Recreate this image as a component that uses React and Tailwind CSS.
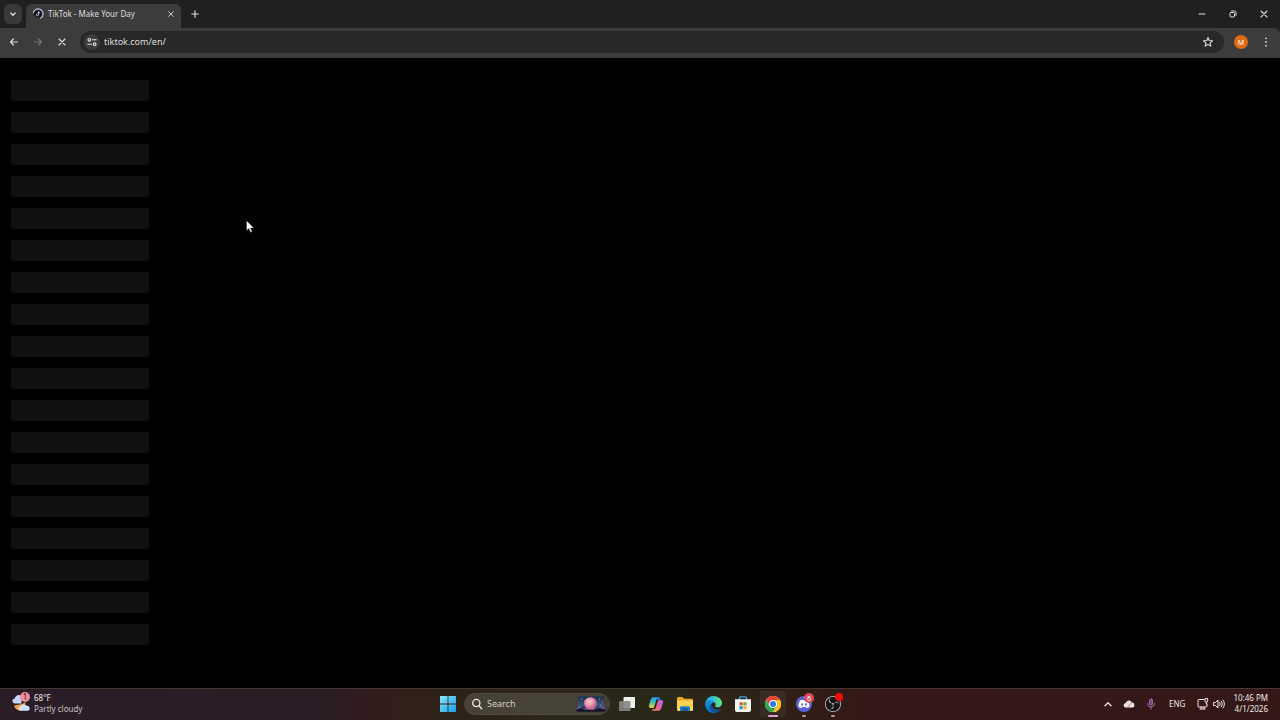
import { FaDiscord } from "react-icons/fa";
import { SiObsstudio } from "react-icons/si";

const stroke = { fill: "none", stroke: "currentColor", strokeLinecap: "round", strokeLinejoin: "round" };

function ChevronIcon({ up = false }) {
  return (
    <svg viewBox="0 0 10 10" className="size-2.5" {...stroke} strokeWidth="1.3">
      <path d={up ? "M2 6.7 5 3.7l3 3" : "M2.8 4 5 6.2 7.2 4"} />
    </svg>
  );
}

function CloseIcon({ className }) {
  return (
    <svg viewBox="0 0 10 10" className={className} {...stroke} strokeWidth="1.1">
      <path d="m2 2 6 6M8 2 2 8" />
    </svg>
  );
}

function ArrowIcon({ forward = false }) {
  return (
    <svg viewBox="0 0 12 12" className="size-3" {...stroke} strokeWidth="1.1">
      <path d={forward ? "M2.500 6h7M6.500 3l3 3-3 3" : "M9.500 6h-7M5.500 3l-3 3 3 3"} />
    </svg>
  );
}

function LoadingFavicon() {
  return (
    <svg viewBox="0 0 12 12" className="size-3">
      <circle cx="6" cy="6" r="3.800" fill="#101114" />
      <path d="M1.300 4.500A5 5 0 1 1 8.500 10.300" fill="none" stroke="#a9bce8" strokeWidth="1.200" strokeLinecap="round" />
      <path d="M6.600 3.600v3.200a1.100 1.100 0 1 1-1.100-1.100M6.600 3.600c.1.8.7 1.300 1.500 1.300" fill="none" stroke="#c9d4e8" strokeWidth=".9" />
    </svg>
  );
}

function TuneIcon() {
  return (
    <svg viewBox="0 0 12 12" className="size-3" {...stroke} strokeWidth="1.100">
      <circle cx="3.300" cy="3.800" r="1.300" />
      <path d="M6.300 3.800h4M1.700 8.200h4" />
      <circle cx="8.700" cy="8.200" r="1.300" />
    </svg>
  );
}

function StarIcon() {
  return (
    <svg viewBox="0 0 12 12" className="size-3" {...stroke} strokeWidth="1.100">
      <path d="m6 1.500 1.300 3 3.200.3-2.400 2.100.7 3.200L6 8.400l-2.800 1.700.7-3.200-2.400-2.100 3.200-.3z" />
    </svg>
  );
}

function WeatherIcon() {
  return (
    <svg viewBox="0 0 20 20" className="size-5">
      <path d="M2 12.500a7 7 0 0 0 5 5l3 .2L14 9l-4 2z" fill="#f2a33d" />
      <path d="M3 10.500a2.500 2.500 0 0 1-.2-5A3.800 3.800 0 0 1 9.500 3.500v7z" fill="#c3d5f5" />
      <path d="M8.500 17.800a2.100 2.100 0 0 1 .2-4.200 3.300 3.300 0 0 1 6-.8 2.500 2.500 0 0 1 .8 5z" fill="#cfe0fb" />
    </svg>
  );
}

function WindowsIcon() {
  return (
    <svg viewBox="0 0 16 16" className="size-4">
      <defs>
        <linearGradient id="win" x1="0" y1="0" x2="1" y2="1">
          <stop stopColor="#8be5fb" />
          <stop offset="1" stopColor="#159be8" />
        </linearGradient>
      </defs>
      <path d="M0 0h7.600v7.600H0zM8.400 0H16v7.600H8.400zM0 8.400h7.600V16H0zM8.400 8.400H16V16H8.400z" fill="url(#win)" />
    </svg>
  );
}

function SearchIcon() {
  return (
    <svg viewBox="0 0 12 12" className="size-3" {...stroke} strokeWidth="1.300">
      <circle cx="5.300" cy="5" r="3.600" />
      <path d="m8 7.700 2.700 3" />
    </svg>
  );
}

function SpaceArt() {
  return (
    <svg viewBox="0 0 32 16" className="h-4 w-8">
      <defs>
        <linearGradient id="sky" x1="0" y1="0" x2="0" y2="1">
          <stop stopColor="#17304f" />
          <stop offset=".55" stopColor="#35577f" />
          <stop offset="1" stopColor="#15172b" />
        </linearGradient>
        <radialGradient id="planet" cx=".4" cy=".35">
          <stop stopColor="#ffc0c8" />
          <stop offset=".7" stopColor="#e990a6" />
          <stop offset="1" stopColor="#c96b91" />
        </radialGradient>
      </defs>
      <path d="M3 .5h26l-1 5 3.500 8Q31 15 29 15.500H3Q1 15 .5 13.500L4 6z" fill="url(#sky)" />
      <path d="m1 13 4-4 3 4 4-1 8 1 4-2 3-2 4 4-2 2H3z" fill="#5e5580" />
      <path d="m1 14 5-2 4 2 5-1 4 1 5-2 7 2-2 1.500H3z" fill="#131329" />
      <circle cx="15.500" cy="7.500" r="6.300" fill="url(#planet)" />
      <path d="M12 5.500q3 1 5-1" stroke="#ffdadd" strokeWidth=".8" fill="none" />
      <path d="M6 3h1M9 5h1M24 3h1M27 6h1M25 9h1" stroke="#e2799f" />
    </svg>
  );
}

function TaskViewIcon() {
  return (
    <svg viewBox="0 0 18 18" className="size-[18px]">
      <rect x="5.500" y="2" width="11.500" height="11" rx="1" fill="#f0f0ee" />
      <rect x="1" y="6" width="11.500" height="10" rx="1" fill="#858585" fillOpacity=".9" />
    </svg>
  );
}

function CopilotIcon() {
  return (
    <svg viewBox="0 0 16 16" className="size-4">
      <defs>
        <linearGradient id="copA" x1="0" y1="0" x2="0" y2="1">
          <stop stopColor="#249ded" />
          <stop offset=".5" stopColor="#43c6a5" />
          <stop offset="1" stopColor="#f2d22c" />
        </linearGradient>
        <linearGradient id="copB" x1="1" y1="0" x2="0" y2="1">
          <stop stopColor="#a760ef" />
          <stop offset=".55" stopColor="#ed5fa0" />
          <stop offset="1" stopColor="#f58748" />
        </linearGradient>
      </defs>
      <path d="M11 1.200H5.500C4 1.200 3.200 2.200 2.700 3.700L1 9.300c-.5 1.700.2 2.700 1.900 2.700h1.600c1 0 1.500-.5 1.800-1.500l1.800-6c.4-1.300.9-1.700 2-1.700H12q-.2-1.600-1-1.600z" fill="url(#copA)" />
      <path d="M10 1.200c1.500 0 1.800.7 2.200 1.900l.3 1h-2.700L8.600 4l.5-1.500z" fill="#1a6ed8" />
      <path d="M5 14.800h5.500c1.500 0 2.300-1 2.800-2.500L15 6.700C15.500 5 14.800 4 13.100 4h-1.600c-1 0-1.500.5-1.800 1.500l-1.800 6c-.4 1.300-.9 1.700-2 1.700H4q.2 1.600 1 1.600z" fill="url(#copB)" />
    </svg>
  );
}

function FolderIcon() {
  return (
    <svg viewBox="0 0 18 16" className="h-4 w-[18px]">
      <path d="M1 2.200Q1 1 2.200 1h4.300l1.800 1.800h7.500Q17 2.800 17 4v4H1z" fill="#e6a51f" />
      <path d="M1 4.500h16v9.300q0 1.200-1.200 1.200H2.200Q1 15 1 13.800z" fill="#fbd354" />
      <path d="M4 15v-3.500Q4 10.200 5.300 10.200h7.400q1.300 0 1.300 1.300V15z" fill="#1a7fc4" />
      <path d="M6 12h6v3H6z" fill="#126198" />
    </svg>
  );
}

function EdgeIcon() {
  return (
    <svg viewBox="0 0 256 256" className="size-[17px]">
      <defs>
        <linearGradient id="edgeA" x1="60" y1="180" x2="240" y2="180" gradientUnits="userSpaceOnUse">
          <stop stopColor="#0c59a4" />
          <stop offset="1" stopColor="#114a8b" />
        </linearGradient>
        <linearGradient id="edgeB" x1="150" y1="90" x2="50" y2="220" gradientUnits="userSpaceOnUse">
          <stop stopColor="#1b9de2" />
          <stop offset="1" stopColor="#0a76cf" />
        </linearGradient>
        <linearGradient id="edgeC" x1="0" y1="100" x2="256" y2="100" gradientUnits="userSpaceOnUse">
          <stop stopColor="#28a9eb" />
          <stop offset=".5" stopColor="#35c1d5" />
          <stop offset="1" stopColor="#66eb6e" />
        </linearGradient>
      </defs>
      <path d="M235.700 195.500a94 94 0 0 1-10.600 4.700 102 102 0 0 1-35.900 6.500c-47.300 0-88.500-32.500-88.500-74.300a31.500 31.500 0 0 1 16.400-27.300c-42.800 1.800-53.800 46.400-53.800 72.500 0 73.900 68 81.400 82.700 81.400 7.900 0 19.800-2.300 27-4.600l1.300-.4a128 128 0 0 0 66.600-52.800 4 4 0 0 0-5.200-5.700z" fill="url(#edgeA)" />
      <path d="M105.700 241.400a79 79 0 0 1-22.700-21.300 80.700 80.700 0 0 1 29.500-120c3.200-1.500 8.500-4.100 15.600-4a32.400 32.400 0 0 1 25.700 13 31.900 31.900 0 0 1 6.300 18.700c0-.2 24.500-79.600-80-79.600C36.200 48.200.1 89.800.1 126.500a130 130 0 0 0 12.100 56 128 128 0 0 0 156.400 67.100 75.500 75.500 0 0 1-62.800-8z" fill="url(#edgeB)" />
      <path d="M152.300 148.900c-.8 1-3.300 2.500-3.300 5.700 0 2.600 1.700 5.100 4.700 7.200 14.400 10 41.500 8.700 41.600 8.700a59.600 59.600 0 0 0 30.300-8.400A61.400 61.400 0 0 0 256 109.200c.3-22.400-8-37.300-11.300-43.900C223.500 23.900 177.700 0 128 0A128 128 0 0 0 0 126.200c.5-36.500 36.800-66 80-66 3.500 0 23.500.3 42 10a72.600 72.600 0 0 1 30.900 29.300c6.100 10.600 7.200 24.100 7.200 29.500 0 5.300-2.700 13.300-7.800 19.900z" fill="url(#edgeC)" />
    </svg>
  );
}

function StoreIcon() {
  return (
    <svg viewBox="0 0 16 18" className="h-[18px] w-4">
      <path d="M4.500 5V2.800q0-1 1-1h5q1 0 1 1V5" fill="none" stroke="#39a9e8" strokeWidth="1.300" />
      <path d="M0 4.300h16V15q0 2-2 2H2q-2 0-2-2z" fill="#f4f5f5" />
      <path d="M4.500 7.200h3.200v3.200H4.500z" fill="#e8543b" />
      <path d="M8.400 7.200h3.200v3.200H8.400z" fill="#74ad35" />
      <path d="M4.500 11.100h3.200v3.200H4.500z" fill="#2a94d8" />
      <path d="M8.400 11.100h3.200v3.200H8.400z" fill="#f3b526" />
    </svg>
  );
}

function ChromeIcon() {
  return (
    <svg viewBox="0 0 48 48" className="size-4">
      <circle cx="24" cy="24" r="24" fill="#fff" />
      <path d="M3.200 12A24 24 0 0 1 44.800 12H24a12 12 0 0 0-10.400 18z" fill="#e84335" />
      <path d="M44.800 12A24 24 0 0 1 24 48l10.400-18A12 12 0 0 0 24 12z" fill="#fbc116" />
      <path d="M24 48A24 24 0 0 1 3.200 12l10.400 18a12 12 0 0 0 20.800 0z" fill="#30a650" />
      <circle cx="24" cy="24" r="11.500" fill="#fff" />
      <circle cx="24" cy="24" r="9" fill="#2b7cec" />
    </svg>
  );
}

function CloudOffIcon() {
  return (
    <svg viewBox="0 0 12 12" className="size-3">
      <path d="M3 9.500a2.300 2.300 0 0 1-.2-4.600 3.200 3.200 0 0 1 6-.4A2.500 2.500 0 0 1 9 9.500z" fill="#ece5e3" />
      <path d="m4.300 9.500 4.500-5" stroke="#9c8582" strokeWidth="1" />
    </svg>
  );
}

function MicIcon() {
  return (
    <svg viewBox="0 0 12 12" className="size-3" {...stroke} strokeWidth="1">
      <rect x="4.500" y="1" width="3" height="6" rx="1.500" fill="#7d4779" />
      <path d="M2.500 5.500a3.500 3.500 0 0 0 7 0M6 9v2" />
    </svg>
  );
}

function NetworkIcon() {
  return (
    <svg viewBox="0 0 12 12" className="size-3" {...stroke} strokeWidth="1">
      <path d="M7 1.500H1.800q-.8 0-.8.800v5.900q0 .8.800.8h7.400q.8 0 .8-.8V6M4 9v2M7 9v2M3 11h5" />
      <path d="M8 1v2q0 1.200 1.300 1.200T10.700 3V1zM9.300 4.200V6" />
    </svg>
  );
}

function VolumeIcon() {
  return (
    <svg viewBox="0 0 12 12" className="size-3" {...stroke} strokeWidth="1">
      <path d="M1 4.500h1.500L5 2v8L2.500 7.500H1zM6.800 4.500q1 1.500 0 3M8.400 3.200q2 2.800 0 5.600M10 2q3 4 0 8" />
    </svg>
  );
}

function TaskButton({ label, children, className = "w-[29px]", active = false, running = false }) {
  return (
    <button aria-label={label} className={`relative flex h-[30px] items-center justify-center ${className}`}>
      <span className={active ? "flex h-[26px] w-[26px] items-center justify-center rounded bg-white/5" : "flex"}>{children}</span>
      {active && <span className="absolute bottom-0.5 left-1/2 h-0.5 w-2.5 -translate-x-1/2 rounded-full bg-[#d9a3d8]" />}
      {running && <span className="absolute bottom-0.5 left-1/2 h-0.5 w-1 -translate-x-1/2 rounded-full bg-[#aaa19e]" />}
    </button>
  );
}

function TabStrip() {
  return (
    <header className="flex h-7 items-stretch bg-[#1f2120] text-[#dededc]">
      <button aria-label="Search tabs" className="my-1 ml-1 flex w-[18px] items-center justify-center rounded-md bg-[#383938]">
        <ChevronIcon />
      </button>
      <div className="mt-1 ml-1 flex w-[155px] items-center rounded-t-md bg-[#3c3c3c] pr-1.5 pb-1 pl-1.5">
        <LoadingFavicon />
        <span className="ml-1 flex-1 whitespace-nowrap text-[8px] leading-3">TikTok - Make Your Day</span>
        <button aria-label="Close tab"><CloseIcon className="size-2" /></button>
      </div>
      <button aria-label="New tab" className="ml-2 flex w-3 items-center justify-center">
        <svg viewBox="0 0 10 10" className="size-2.5" {...stroke} strokeWidth="1.100"><path d="M5 1.800v6.400M1.800 5h6.400" /></svg>
      </button>
      <div className="ml-auto flex items-center">
        <button aria-label="Minimize" className="flex w-8 justify-center">
          <svg viewBox="0 0 10 10" className="size-2.5" {...stroke}><path d="M2 5h6" /></svg>
        </button>
        <button aria-label="Restore" className="flex w-[30px] justify-center">
          <svg viewBox="0 0 10 10" className="size-2.5" {...stroke}>
            <rect x="2" y="3.500" width="4.500" height="4.500" rx="1" />
            <path d="M3.500 2h3q1.500 0 1.500 1.500v3" />
          </svg>
        </button>
        <button aria-label="Close" className="flex w-8 justify-center"><CloseIcon className="size-2.5" /></button>
      </div>
    </header>
  );
}

function Toolbar() {
  return (
    <nav aria-label="Browser toolbar" className="flex h-[30px] items-center rounded-tr-md bg-[#3c3c3c] pb-0.5 text-[#dededc]">
      <div className="flex w-20 items-center gap-3 pl-2">
        <button aria-label="Back"><ArrowIcon /></button>
        <button aria-label="Forward" disabled className="text-[#777776]"><ArrowIcon forward /></button>
        <button aria-label="Stop loading" className="flex size-3 items-center justify-center"><CloseIcon className="size-2.5" /></button>
      </div>
      <div className="flex h-[22px] flex-1 items-center rounded-full bg-[#282828] pr-2.5 pl-1">
        <button aria-label="View site information" className="flex size-4 items-center justify-center rounded-full bg-[#3c3c3c]">
          <TuneIcon />
        </button>
        <input aria-label="Address" defaultValue="tiktok.com/en/" className="ml-1 min-w-0 flex-1 bg-transparent text-[9px] leading-4 outline-none" />
        <button aria-label="Bookmark this tab"><StarIcon /></button>
      </div>
      <button aria-label="Profile" className="ml-2.5 flex size-3.5 items-center justify-center rounded-full bg-[#e06c12] text-[7px] leading-none text-white">M</button>
      <button aria-label="Browser menu" className="mr-2 ml-3 flex w-3 justify-center">
        <svg viewBox="0 0 12 12" className="size-3" fill="currentColor">
          <circle cx="6" cy="2.300" r=".9" /><circle cx="6" cy="6" r=".9" /><circle cx="6" cy="9.700" r=".9" />
        </svg>
      </button>
    </nav>
  );
}

function Taskbar() {
  return (
    <footer className="flex h-8 items-center border-t border-[#443732] bg-[linear-gradient(to_right,#2a1d27_0%,#2c1c24_26%,#331c1c_30%,#2e2117_34%,#2a2718_44%,#292918_52%,#2f2117_60%,#351817_68%,#341817_100%)] pb-px text-[#eee8e6]">
      <div className="flex flex-1 items-center pl-3">
        <button className="flex items-center gap-0.5 pb-0.5 text-left">
          <span className="relative flex">
            <WeatherIcon />
            <span className="absolute -top-px left-2 flex size-2.5 items-center justify-center rounded-full bg-[#f08c9e] text-[8px] leading-none text-[#33212a]">1</span>
          </span>
          <span className="flex flex-col text-[8px] leading-[11px]">
            <span>68°F</span>
            <span className="text-[#c9c0c4]">Partly cloudy</span>
          </span>
        </button>
      </div>
      <div className="flex items-center">
        <TaskButton label="Start"><WindowsIcon /></TaskButton>
        <label className="mx-0.5 flex h-[22px] w-[146px] items-center rounded-full border border-[#4d493b] bg-[#464236] pr-0.5 pl-1.5">
          <SearchIcon />
          <input aria-label="Search" placeholder="Search" className="ml-1 min-w-0 flex-1 bg-transparent text-[9px] leading-4 outline-none placeholder:text-[#d2cfc7]" />
          <SpaceArt />
        </label>
        <TaskButton label="Task view"><TaskViewIcon /></TaskButton>
        <TaskButton label="Copilot"><CopilotIcon /></TaskButton>
        <TaskButton label="File Explorer"><FolderIcon /></TaskButton>
        <TaskButton label="Edge"><EdgeIcon /></TaskButton>
        <TaskButton label="Microsoft Store"><StoreIcon /></TaskButton>
        <TaskButton label="Chrome" className="w-8" active><ChromeIcon /></TaskButton>
        <TaskButton label="Discord" running>
          <span className="flex size-4 items-center justify-center rounded-full bg-[#5961d8] text-white"><FaDiscord className="size-3" /></span>
          <span className="absolute top-1 right-1 flex size-2.5 items-center justify-center rounded-full bg-[#db4d5d] text-[7px] leading-none text-white">6</span>
        </TaskButton>
        <TaskButton label="OBS Studio" running>
          <span className="flex size-4 items-center justify-center rounded-full bg-[#17171a] text-[#d0cccb]"><SiObsstudio className="size-4" /></span>
          <span className="absolute top-1 right-1 size-2 rounded-full bg-[#f20d0d]" />
        </TaskButton>
      </div>
      <div className="flex flex-1 items-center justify-end pr-3">
        <button aria-label="Show hidden icons"><ChevronIcon up /></button>
        <button aria-label="OneDrive" className="ml-2.5"><CloudOffIcon /></button>
        <button aria-label="Microphone" className="ml-2.5 text-[#a76aa6]"><MicIcon /></button>
        <button aria-label="Input language" className="ml-3 text-[8px] leading-3">ENG</button>
        <button aria-label="Network and volume" className="ml-3 flex gap-1"><NetworkIcon /><VolumeIcon /></button>
        <button className="ml-2 flex flex-col items-end pb-0.5 text-[8px] leading-[11px]">
          <span>10:46 PM</span>
          <span>4/1/2026</span>
        </button>
      </div>
    </footer>
  );
}

export default function App() {
  return (
    <div className="relative flex h-screen flex-col overflow-hidden bg-black font-['Noto_Sans',sans-serif]">
      <div className="bg-[#1f2120]">
        <TabStrip />
        <Toolbar />
      </div>
      <main aria-busy="true" className="flex min-h-0 flex-1 flex-col gap-[11px] px-[11px] pt-[22px]">
        {Array.from({ length: 18 }, (_, i) => (
          <div key={i} className="h-[21px] w-[138px] shrink-0 rounded-xs bg-[#111111]" />
        ))}
      </main>
      <Taskbar />
      <svg viewBox="0 0 8 13" className="absolute top-[220px] left-[246px] h-[13px] w-2">
        <path d="M.5.500v10.300l2.300-2.200 1.700 3.800 1.700-.8-1.600-3.600h3.200z" fill="#fff" stroke="#222" strokeWidth=".5" />
      </svg>
    </div>
  );
}
